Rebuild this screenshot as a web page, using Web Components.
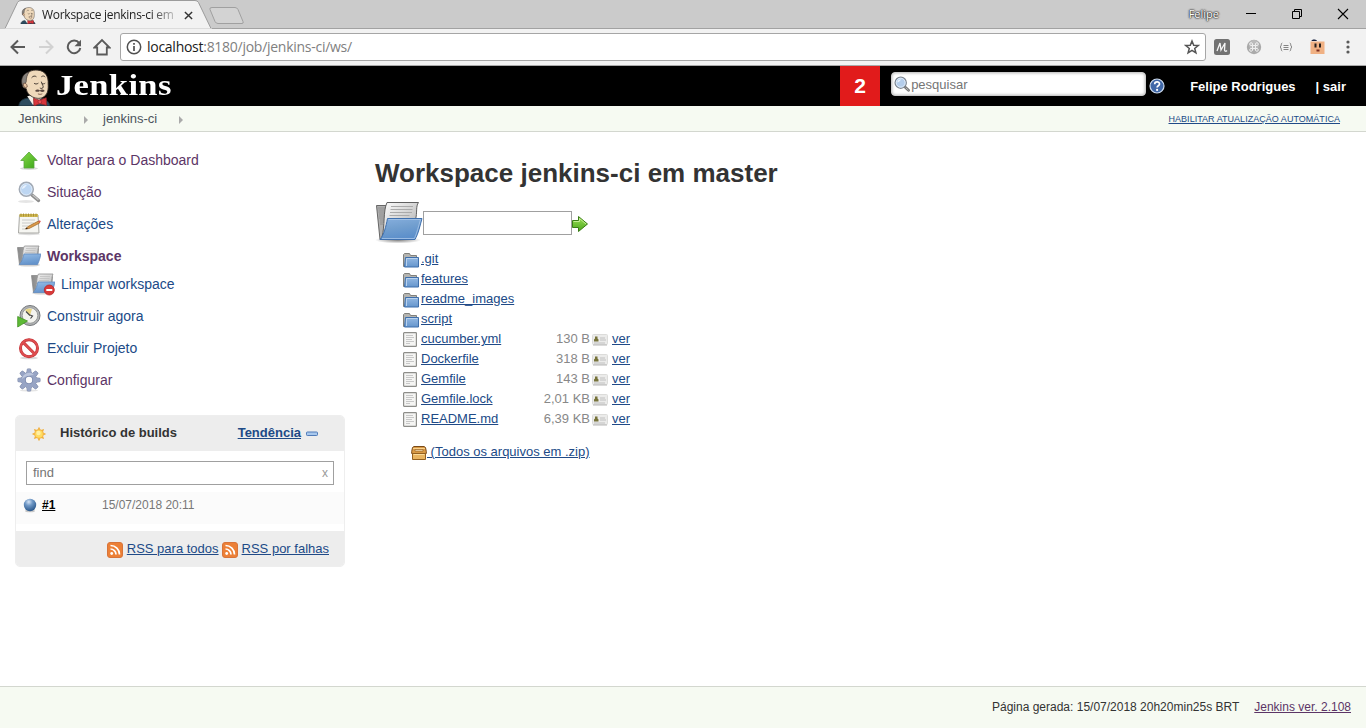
<!DOCTYPE html>
<html lang="pt-BR">
<head>
<meta charset="utf-8">
<title>Workspace jenkins-ci em master [Jenkins]</title>
<style>
html,body{margin:0;height:728px;overflow:hidden;background:#fff}
body{font:13px/20px "Liberation Sans",Arial,sans-serif;color:#333}
</style>
</head>
<body>
<jk-window></jk-window>
<script>
const define = (name, html) => customElements.define(name, class extends HTMLElement {
  connectedCallback() {
    if (this.shadowRoot) return;
    const t = document.createElement('template');
    t.innerHTML = typeof html === 'function' ? html(this) : html;
    this.attachShadow({mode:'open'}).append(t.content.cloneNode(true));
  }
});

const folder24 = `<defs><linearGradient id="b" x2=".3" y2="1"><stop stop-color="#94bce6"/><stop offset="1" stop-color="#6493cb"/></linearGradient><linearGradient id="g" x2="1"><stop stop-color="#8a8a8a"/><stop offset="1" stop-color="#c4c4c4"/></linearGradient><linearGradient id="p" x2="1" y2="1"><stop stop-color="#f0f0f0"/><stop offset="1" stop-color="#b8b8b8"/></linearGradient></defs>
<ellipse cx="12" cy="21" rx="11" ry="1.600" fill="#000" opacity=".18"/>
<path d="M.5 3.500h6l1 1h14l-1 13H4L2.500 20.500z" fill="url(#g)" stroke="#8a8a8a" stroke-width=".8"/>
<path d="M7.500 2H22c-1.400 2.500-1 6-2 10.500L4.500 17C6 11 5.500 5 7.500 2z" fill="url(#p)" stroke="#909090" stroke-width=".8"/>
<path d="M9 4.500h10M8.500 6.500h10M8 8.500h10" stroke="#c0c0c0" stroke-width=".8"/>
<path d="M7 10h17c-1 4-2 7.500-3.500 10.500H2.500c2.500-3 3.500-6.500 4.500-10.500z" fill="url(#b)" stroke="#5f8ac0" stroke-width=".8"/>`;
const rays = Array.from({length:8},(_,i)=>`<path d="M8 .8l1.500 3h-3z" transform="rotate(${i*45} 8 8)"/>`).join('');
const teeth = Array.from({length:8},(_,i)=>`<path d="M9.800 5.500l.6-4.500h3.200l.6 4.500z" transform="rotate(${i*45} 12 12)"/>`).join('');
const ICONS = {
  up:['0 0 24 24',`<defs><linearGradient id="a" x2="1" y2="1"><stop stop-color="#8bdc4b"/><stop offset="1" stop-color="#3aa518"/></linearGradient></defs><ellipse cx="12" cy="20.500" rx="9" ry="1.500" opacity=".15"/><path d="M12 4l8.200 8.500H17v7.500H7v-7.500H3.800z" fill="url(#a)" stroke="#58a43c" stroke-width=".8"/>`],
  search:['0 0 24 24',`<ellipse cx="9" cy="21.500" rx="8" ry="1.500" opacity=".1"/><path d="M15 15l6.500 5.500" stroke="#8c8c8c" stroke-width="3.400" stroke-linecap="round"/><path d="M16 15.300l5 4.200" stroke="#c4c4c4" stroke-width="1.400" stroke-linecap="round"/><circle cx="9.300" cy="9.300" r="6.900" fill="#bdd6f2" stroke="#a2aab5" stroke-width="1.700"/><circle cx="9.300" cy="9.300" r="5.700" fill="none" stroke="#e2edf9" stroke-width=".9"/><path d="M5 9c0-3 3-4.500 5-4C8.500 6.500 8 8 5 9z" fill="#e8f2fd"/>`],
  lens:['0 0 16 16',`<path d="M11 11l3.500 3.300" stroke="#777" stroke-width="2.800" stroke-linecap="round"/><path d="M12 12l2.200 2" stroke="#b8b8b8" stroke-width="1" stroke-linecap="round"/><circle cx="6.700" cy="6.700" r="5.600" fill="#b4cdeb" stroke="#7d858f" stroke-width="1.300"/><circle cx="6.700" cy="6.700" r="4.500" fill="none" stroke="#e2edf9" stroke-width=".9"/><path d="M3.300 6.500c0-2.200 2-3.500 4-3C6 4.500 5.500 6 3.300 6.500z" fill="#eaf3fd"/>`],
  notepad:['0 0 24 24',`<ellipse cx="12" cy="22" rx="11" ry="1.200" opacity=".13"/><path d="M2.500 3h18.500l1 18H1.500z" fill="#f6f6f2" stroke="#a8a8a4"/><path d="M2.500 2h18.500v3h-18.500z" fill="#d1bb57"/><path d="M4 1.500v3M6.500 1.500v3M9 1.500v3M11.500 1.500v3M14 1.500v3M16.500 1.500v3M19 1.500v3" stroke="#a0842a" stroke-width=".8"/><path d="M5 8h13M5 11h12M5 14h6M5 17h5" stroke="#cacac8"/><path d="M8.500 17l2.500-2.500L21.500 9l1.200 2-10.500 5.500z" fill="#dc9a4b" stroke="#9b6528" stroke-width=".7"/><path d="M8.500 17l1.300-1.500 1 1z"/><path d="M21.500 9l1.500-.8.800 1.500-1.300 1z" fill="#d55"/>`],
  folder:['0 0 24 24',folder24],
  wipe:['0 0 24 24',folder24+`<circle cx="18.300" cy="18" r="5" fill="#d93a3a" stroke="#b72727" stroke-width=".8"/><path d="M15.300 17h6v2h-6z" fill="#fff"/>`],
  clock:['0 0 24 24',`<circle cx="13" cy="11.500" r="10" fill="#b0b2b4" stroke="#75787b"/><circle cx="13" cy="11.500" r="7.800" fill="#f3f3ef" stroke="#9a9d9c"/><path d="M13 11.500L8 6a7 7 0 0 1 7-1z" fill="#e8d584"/><path d="M9 7.500l4 4M13.500 14.500l2-2.500-2.500-1" stroke="#484848" stroke-width="1.200" fill="none"/><path d="M.7 12.500l9.800 4.500L.7 23z" fill="#5dba35" stroke="#439125" stroke-width=".8"/>`],
  no:['0 0 24 24',`<ellipse cx="12" cy="22" rx="9" ry="1.300" opacity=".14"/><circle cx="12" cy="12.200" r="8.500" fill="#fff" stroke="#c03338" stroke-width="3"/><path d="M6.200 6.400l11.600 11.600" stroke="#c03338" stroke-width="3"/><circle cx="12" cy="12.200" r="8.500" fill="none" stroke="#df4e50" stroke-width="1.800"/><path d="M6.200 6.400l11.600 11.600" stroke="#df4e50" stroke-width="1.800"/>`],
  gear:['0 0 24 24',`<ellipse cx="12" cy="22.500" rx="9" ry="1" opacity=".1"/><g fill="#8c99ba" stroke="#7c88a8" stroke-width="1">${teeth}<circle cx="12" cy="12" r="7.500"/></g><g fill="#97a4c4">${teeth}<circle cx="12" cy="12" r="7.500"/></g><path d="M5 11a7 7 0 0 1 12-4c-4 0-8 1-12 4z" fill="#bbc5dc"/><circle cx="12" cy="12" r="4" fill="#7b89ad"/><circle cx="12" cy="12" r="3.200" fill="#fff"/>`],
  sun:['0 0 16 16',`<g fill="#f0ae38">${rays}</g><circle cx="8" cy="8" r="4.700" fill="#f4b23d"/><circle cx="8" cy="8" r="3.800" fill="#ffdc62"/><circle cx="7.500" cy="7" r="2.200" fill="#fff0a4"/>`],
  ball:['0 0 16 16',`<defs><radialGradient id="a" cx=".4" cy=".25" r=".75"><stop stop-color="#d4e3f5"/><stop offset=".4" stop-color="#6f98c6"/><stop offset="1" stop-color="#2a578b"/></radialGradient></defs><ellipse cx="8" cy="14" rx="5" ry="1.300" opacity=".2"/><circle cx="8" cy="8" r="6.200" fill="url(#a)"/>`],
  rss:['0 0 16 16',`<rect x=".5" y=".5" width="15" height="15" rx="2.500" fill="#ec8037" stroke="#d8743a"/><path d="M3.500 3.500c5 0 9 4 9 9M3.500 7c3 0 5.500 2.500 5.500 5.500" stroke="#fff" stroke-width="1.700" fill="none"/><circle cx="4.700" cy="11.500" r="1.400" fill="#fff"/>`],
  big:['0 0 48 48',`<defs><linearGradient id="b" x2=".3" y2="1"><stop stop-color="#87afde"/><stop offset=".5" stop-color="#729fcf"/><stop offset="1" stop-color="#5c8fcb"/></linearGradient><linearGradient id="p" x2="1" y2="1"><stop stop-color="#fff"/><stop offset="1" stop-color="#a8a8a8"/></linearGradient><radialGradient id="s"><stop stop-opacity=".5"/><stop offset="1" stop-opacity="0"/></radialGradient></defs><ellipse cx="23" cy="42" rx="23" ry="3.500" fill="url(#s)"/><path d="M1.500 7.500h10l2 1.500H36l-1 29-27 3.500H5z" fill="#b0b0b0" stroke="#666"/><path d="M3 10h7M3.500 12h7M3.500 14h7M4 16h6M4 18h6M4 20h5M5 22h4M5 24h4M5 26h3" stroke="#888" stroke-width=".8"/><path d="M12 4.500h31.500c-3 4-1 10-3 17L7 39C10 28 8 13 12 4.500z" fill="url(#p)" stroke="#606060"/><path d="M16 8.500h22M15.500 11.500h22M15 14.500h22M14.500 17.500h20" stroke="#aaa"/><path d="M12.500 20.500h34.500c-2 7-3.500 15-7 21H5c4-5 6-13 7.500-21z" fill="url(#b)" stroke="#3f70ae"/><path d="M13.500 21.500h32c-2 7-3.500 13-6 19H7" fill="none" stroke="#a9c7e8" stroke-width=".8"/>`],
  go:['0 0 16 16',`<defs><linearGradient id="a" y2="1" x2="0"><stop stop-color="#9cde57"/><stop offset="1" stop-color="#4ba81c"/></linearGradient></defs><path d="M.5 4.500h6v-4L15.500 8l-9 7.500v-4h-6z" fill="url(#a)" stroke="#3a7d16"/><path d="M1.500 5.500h6v-3L14 8" fill="none" stroke="#c9f29a" stroke-width=".9"/>`],
  dir:['0 0 16 16',`<defs><linearGradient id="a" x2="0" y2="1"><stop stop-color="#93b8e2"/><stop offset="1" stop-color="#6595cc"/></linearGradient></defs><path d="M.5 14.500V2.500l1-1h5l1 2h6v10z" fill="#b4b4b0" stroke="#80807c"/><path d="M2.500 5.500h13v9.500h-14z" fill="url(#a)" stroke="#3f6fab"/><path d="M3.500 14V6.500h11" fill="none" stroke="#b9d2ee"/>`],
  file:['0 0 16 16',`<rect x=".6" y=".6" width="12.800" height="13.800" rx=".7" fill="#f5f5f3" stroke="#8e8e8a" stroke-width="1.200"/><path d="M3 3.500h7M3 5.500h8M3 7.500h6M3 9.500h8M3 11.500h4" stroke="#c8c8c8"/>`],
  card:['0 0 16 16',`<rect x=".5" y="3.500" width="15" height="10" rx="1" fill="#ebebea" stroke="#dcdcda"/><path d="M1 14h14" stroke="#b8b8b8"/><path d="M2 10.500V8.500L3 7.500V5.500h2.500v2l1 1v2z" fill="#77733a"/><path d="M8 7h5M8 9h6M2 12h11" stroke="#c0c0c0"/>`],
  zip:['0 0 16 16',`<path d="M1.500 2.500l1.500-1h10l1.500 1 .8 4v2H.7v-2z" fill="#d99a45" stroke="#7a4a18"/><path d="M2 3.500h12" stroke="#fbd28c"/><path d="M4 4.500h8v1.600H4z" fill="#fce6bb" stroke="#8d581c" stroke-width=".6"/><path d="M1.500 8.500h13v6h-13z" fill="#e9b561" stroke="#94601f"/><path d="M2.500 9.500h11" stroke="#fbdc9d"/>`],
  help:['0 0 16 16',`<circle cx="8" cy="8" r="7" fill="#4068a8" stroke="#cfdcee" stroke-width="1.200"/><path d="M5.700 6.200c0-3 4.800-3 4.800-.2 0 1.800-2.400 1.700-2.400 3.600" stroke="#fff" stroke-width="1.700" fill="none"/><circle cx="8.100" cy="11.900" r="1.100" fill="#fff"/>`],
  collapse:['0 0 12 6',`<rect x=".5" y="1" width="11" height="3.500" rx=".8" fill="#a8c8ed" stroke="#507bb8"/>`],
  butler:['0 0 33 38',`<path d="M.5 38c0-5 4-7 8-8h16c4 1 7 4 8 8z" fill="#2d4c5f" stroke="#1b2e38"/><path d="M9 28l6 9 10-8-3-4z" fill="#f4f1e9"/>
<path d="M6 8C9 2.500 14 .8 20 1.200c8 .8 11 7 10.500 14 .3 5 0 10-4 13-3 2.500-8 2.500-12 .5-4-2-6-5-6.500-8.500C4 19 3 16 5.500 14z" fill="#efd9bb" stroke="#332a25" stroke-width=".9"/><path d="M4 17C2 11 4 4.500 11 3 9 6 8 9 8 13l-1.500 3z" fill="#86817c" stroke="#332a25" stroke-width=".6"/><path d="M5 15c2.500-1 4 .5 4 3.500-2.500 1.500-4-.5-4-3.500z" fill="#e6c4a2" stroke="#5a3d2f" stroke-width=".7"/><path d="M13.500 9c1.500-2 3.500-2.200 5-1M23.500 8c1.500-1.200 3-1 4 .3M16 14.500c1 1.200 3 1.200 4.500 0M24 14.500c1 1 2.500 1 3.500 0M23.500 13c.5 3 3 5 1.500 6.500-1 .8-2.300.4-3 0" fill="none" stroke="#332a25" stroke-width=".9"/><path d="M17 22.500c2-2.300 4-1.500 5-.5 1.500-1.500 4-1 5 .5-2 1.700-3.500 1-5 0-1.500 1.200-3 1.300-5 0z" fill="#5b4840"/><path d="M20 25.500c1.500.7 3 .7 4.500 0" fill="none" stroke="#6d493c" stroke-width=".8"/><path d="M15.500 30l6 2 7-2.500.5 8-7-2-6 2.500z" fill="#d8363c" stroke="#8c2628" stroke-width=".8"/><circle cx="22" cy="33.700" r="1.900" fill="#ea5055" stroke="#8c2628" stroke-width=".6"/>`],
  back:['0 0 16 16',`<path d="M15 8H2.500M8 1.500L1.500 8 8 14.500" fill="none" stroke="#5a5a5a" stroke-width="2"/>`],
  fwd:['0 0 16 16',`<path d="M1 8h12.500M8 1.500L14.500 8 8 14.500" fill="none" stroke="#d2d2d2" stroke-width="2"/>`],
  reload:['0 0 16 16',`<path d="M13.200 4.200A6.300 6.300 0 1 0 14.300 9" fill="none" stroke="#5a5a5a" stroke-width="2"/><path d="M15 .8v6.500H8.500z" fill="#5a5a5a"/>`],
  home:['0 0 18 18',`<path d="M1.500 9.500L9 2l7.500 7.500h-2.700v7H4.200v-7z" fill="none" stroke="#5a5a5a" stroke-width="1.800"/>`],
  info:['0 0 16 16',`<circle cx="8" cy="8" r="6.700" fill="none" stroke="#505050" stroke-width="1.500"/><path d="M8 7v5M8 4v1.800" stroke="#505050" stroke-width="1.700"/>`],
  star:['0 0 16 16',`<path d="M8 2l1.700 4.200 4.500.3-3.500 2.900 1.200 4.400L8 11.300l-3.900 2.500 1.200-4.400-3.500-2.900 4.500-.3z" fill="none" stroke="#555" stroke-width="1.500"/>`],
  ext1:['0 0 16 16',`<rect width="16" height="16" rx="2.500" fill="#727272"/><path d="M3 12L6 4l1 7 4-7-.5 7c0 1.600 1.500 1.500 2.500.5" stroke="#f5f5f5" stroke-width="1.300" fill="none"/>`],
  ext2:['0 0 16 16',`<circle cx="8" cy="8" r="7.200" fill="#aaa"/><circle cx="8" cy="6" r="5" fill="#bbb"/><path d="M6.500 6.500h3v3h-3zM6.500 6.500H5A1.400 1.400 0 1 1 6.500 5zM9.500 6.500V5A1.400 1.400 0 1 1 11 6.500zM9.500 9.500H11A1.400 1.400 0 1 1 9.500 11zM6.500 9.500V11A1.400 1.400 0 1 1 5 9.500z" fill="none" stroke="#eee"/>`],
  ext3:['0 0 16 16',`<path d="M4.300 4C2.500 4 4 7.500 2 8c2 .5.500 4 2.300 4M11.700 4c1.800 0 .3 3.500 2.300 4-2 .5-.5 4-2.300 4M5.500 6.500h5M5.500 8.500h5M5.500 10.500h5" fill="none" stroke="#777" stroke-width=".9"/>`],
  ext4:['0 0 16 16',`<path d="M.5 2.500h14v12.500H.5z" fill="#f0b184"/><path d="M1.500 2c0-2 5-2 5.500 0z" fill="#16213e"/><path d="M4.500 4.500h2v4h-2zM9 4.500h2v4H9z" fill="#26201e"/><path d="M6.500 10.500h3v2h-3z" fill="#7b2d20"/>`],
  menu:['0 0 4 14',`<g fill="#5a5a5a"><circle cx="2" cy="2" r="1.600"/><circle cx="2" cy="7" r="1.600"/><circle cx="2" cy="12" r="1.600"/></g>`],
  x:['0 0 10 10',`<path d="M1 1l8 8M9 1L1 9" stroke="#333" stroke-width="1.600"/>`],
  wmin:['0 0 12 12',`<path d="M1 5.500h10" stroke="#000"/>`],
  wmax:['0 0 12 12',`<path d="M1.500 3.500h7v7h-7zM3.500 3.500v-2h7v7h-2" fill="none" stroke="#000"/>`],
  wclose:['0 0 12 12',`<path d="M1 1l10 10M11 1L1 11" stroke="#000" stroke-width="1.100"/>`],
};
define('jk-icon', e => {
  const [vb, art] = ICONS[e.getAttribute('name')];
  const w = e.getAttribute('w') || 16, h = e.getAttribute('h') || w;
  return `<style>:host{display:block;flex:none;width:${w}px;height:${h}px}svg{display:block}</style><svg width="${w}" height="${h}" viewBox="${vb}" aria-hidden="true">${art}</svg>`;
});

define('chrome-tabs', `<style>
:host{display:flex;height:28px;background:#cbcbcb;border-bottom:1px solid #a2a2a2;font:12px/28px "Open Sans","Noto Sans",sans-serif;color:#222}
.strip{flex:1;display:grid}
.strip>*{grid-area:1/1}
.tab{display:flex;align-items:center;padding:2px 0 0 20px;height:26px}
.title{margin-left:6px;width:132px;overflow:hidden;white-space:nowrap;letter-spacing:-.28px;-webkit-mask:linear-gradient(90deg,#000 108px,transparent 140px);margin-right:10px}
.win{display:flex;align-items:center;padding-right:17px}
.user{color:#fff;font-size:11px;line-height:26px;text-shadow:0 0 2px #222,0 0 2px #222,0 0 1px #222;margin-right:26px}
.win jk-icon{margin-right:34px}.win jk-icon:last-child{margin:0}
</style>
<div class="strip"><svg width="260" height="29"><path d="M0 28.500h5L17.500 2.500Q18.500.5 21 .5h174q2.500 0 3.500 2L211 28.500V29H0z" fill="#f2f2f2" stroke="#9b9b9b"/><path d="M0 29h212" stroke="#f2f2f2"/><path d="M212 7.500h23q2 0 3 2l5 12q.8 2-1 2h-24q-2 0-3-2l-5-12q-.8-2 2-2z" fill="#d3d3d3" stroke="#a0a0a0"/></svg>
<div class="tab"><jk-icon name="butler" w="16" h="17"></jk-icon><span class="title">Workspace jenkins-ci em</span><jk-icon name="x" w="9"></jk-icon></div></div>
<div class="win"><span class="user">Felipe</span><jk-icon name="wmin" w="12"></jk-icon><jk-icon name="wmax" w="12"></jk-icon><jk-icon name="wclose" w="12"></jk-icon></div>`);

define('chrome-toolbar', `<style>
:host{display:flex;box-sizing:border-box;height:37px;background:#f2f2f2;border-bottom:1px solid #a9a9a9;align-items:center;padding:0 16px 0 10px;font:14px/26px "Open Sans","Noto Sans",sans-serif}
.nav{display:flex;gap:12px;width:110px;align-items:center}.nav :last-child{margin-left:-1px}
.url{flex:1;box-sizing:border-box;height:28px;border:1px solid #a6a6a6;border-radius:3px;background:#fff;display:flex;align-items:center;padding:0 5px 0 5px;margin-right:8px;color:#808080}
.url span{flex:1;margin-left:5px;letter-spacing:-.27px}b{font-weight:400;color:#1b1b1b}
.ext{display:flex;gap:16px;align-items:center}.ext :last-child{margin-left:4px}
</style>
<div class="nav"><jk-icon name="back"></jk-icon><jk-icon name="fwd"></jk-icon><jk-icon name="reload"></jk-icon><jk-icon name="home" w="18"></jk-icon></div>
<div class="url"><jk-icon name="info" w="16"></jk-icon><span><b>localhost</b>:8180/job/jenkins-ci/ws/</span><jk-icon name="star"></jk-icon></div>
<div class="ext"><jk-icon name="ext1"></jk-icon><jk-icon name="ext2"></jk-icon><jk-icon name="ext3"></jk-icon><jk-icon name="ext4"></jk-icon><jk-icon name="menu" w="4" h="14"></jk-icon></div>`);

define('jk-header', `<style>
:host{display:flex;height:40px;background:#000;color:#fff;font-weight:700;align-items:center;font-size:13px}
.logo{display:flex;flex:1;padding-left:18px;height:40px;align-items:flex-end}
.name{font:700 29px/38px "Liberation Serif",Georgia,serif;align-self:flex-start;margin-left:5px;letter-spacing:.3px;transform:scaleX(1.19);transform-origin:0 50%}
.count{width:40px;height:40px;background:#e11b1b;text-align:center;font-size:21px;line-height:40px;margin-right:11px}
.search{box-sizing:border-box;width:255px;height:24px;border-radius:4px;background:#fff;border:1px solid #ccc;box-shadow:inset 0 0 3px #aaa;display:flex;align-items:center;color:#757575;font-weight:400;margin:-4px 3px 0 0;padding-left:2px}
.search span{padding:2px 0 0 1px}
.who{margin-left:25px;padding-top:2px}.out{margin:0 20px 0 20px;padding-top:2px}
</style>
<div class="logo"><jk-icon name="butler" w="33" h="37"></jk-icon><span class="name">Jenkins</span></div>
<div class="count">2</div><div class="search"><jk-icon name="lens"></jk-icon><span>pesquisar</span></div><jk-icon name="help"></jk-icon><span class="who">Felipe Rodrigues</span><span class="out">| sair</span>`);

define('jk-breadcrumbs', `<style>
:host{display:flex;box-sizing:border-box;height:26px;background:#f6faf2;border-bottom:1px solid #d3d7cf;align-items:center;padding:0 26px 0 18px;color:#4d545d;font-size:13px;line-height:24px}
i{border:4px solid transparent;border-left-color:#aaa;border-right:0;margin:2px 15px 0 22px}
a{margin-left:auto;color:#204a87;text-decoration:underline;font-size:9px;letter-spacing:.03px}
</style><span>Jenkins</span><i></i><span>jenkins-ci</span><i></i><a>HABILITAR ATUALIZAÇÃO AUTOMÁTICA</a>`);

define('jk-task', e => `<style>
:host{display:flex;height:32px;align-items:center;gap:6px;font-size:14px;color:#204a87}
:host([visited]){color:#5c3566}:host([current]){font-weight:700}
:host([sub]){height:24px;margin:0 0 4px 14px}
</style><jk-icon name="${e.getAttribute('icon')}" w="24"></jk-icon><span><slot></slot></span>`);

define('jk-history', `<style>
:host{display:block;box-sizing:border-box;margin:19px 0 0 -2px;width:330px;height:152px;border:1px solid #eee;border-radius:5px;overflow:hidden}
a{color:#204a87;text-decoration:underline}
.head{display:flex;height:35px;background:#ededed;align-items:center;font-weight:700;font-size:13px;padding:0 26px 0 15px}
.head b{margin-left:13px;flex:1}.head a{margin-right:5px}.head b,.head a{padding-bottom:2px}
.find{box-sizing:border-box;margin:10px 10px 7px;border:1px solid #a0a0a0;height:24px;display:flex;justify-content:space-between;line-height:22px;padding:0 5px 0 6px;color:#757575}
.find i{font-style:normal;font-size:12px;color:#999}
.row{display:flex;height:32px;background:#fbfbfb;padding-left:6px}
.row jk-icon{margin-top:5px}.row a{font-weight:700;color:#000;font-size:12px;line-height:26px;margin-left:4px;width:60px}.row span{font-size:12px;line-height:26px;color:#777}
.foot{display:flex;height:35px;margin-top:7px;background:#ededed;align-items:center;justify-content:flex-end;gap:4px;padding-right:15px;font-size:13px}
.foot jk-icon{margin:3px 0 0 -1px}
</style>
<div class="head"><jk-icon name="sun"></jk-icon><b>Histórico de builds</b><a>Tendência</a><jk-icon name="collapse" w="12" h="6"></jk-icon></div>
<div class="find"><span>find</span><i>x</i></div>
<div class="row"><jk-icon name="ball"></jk-icon><a>#1</a><span>15/07/2018 20:11</span></div>
<div class="foot"><jk-icon name="rss"></jk-icon><a>RSS para todos</a><jk-icon name="rss"></jk-icon><a>RSS por falhas</a></div>`);

define('jk-side', `<style>:host{display:block;width:358px;box-sizing:border-box;padding:12px 0 0 17px}</style>
<jk-task icon="up" visited>Voltar para o Dashboard</jk-task><jk-task icon="search" visited>Situação</jk-task><jk-task icon="notepad">Alterações</jk-task><jk-task icon="folder" visited current>Workspace</jk-task><jk-task icon="wipe" sub>Limpar workspace</jk-task><jk-task icon="clock">Construir agora</jk-task><jk-task icon="no">Excluir Projeto</jk-task><jk-task icon="gear" visited>Configurar</jk-task>
<jk-history></jk-history>`);

define('jk-file', e => {
  const size = e.getAttribute('size');
  return `<style>
:host{display:flex;height:20px;line-height:20px;align-items:flex-start;width:259px;font-size:13px}
a{color:#204a87;text-decoration:underline}.n{margin-left:2px;flex:1}.s{color:#888}
jk-icon{margin-top:3px}.c{margin:2px 4px 0 2px}.v{width:50px;flex:none}
</style><jk-icon name="${size?'file':'dir'}"></jk-icon><a class="n"><slot></slot></a>${size?`<span class="s">${size}</span><jk-icon class="c" name="card"></jk-icon><span class="v"><a>ver</a></span>`:''}`;
});

define('jk-workspace', `<style>
:host{display:block;padding:24px 0 0 17px}
h1{margin:0;font-size:26px;line-height:34px;color:#333}
.path{display:flex;align-items:center;height:48px;margin:8px 0 2px}
.path div{box-sizing:border-box;width:149px;height:24px;border:1px solid #a0a0a0;margin-top:1px}
.path .go{margin-top:4px}
.files{padding:1px 0 0 28px}
.zip{display:flex;align-items:center;margin:13px 0 0 36px;font-size:13px}
.zip a{color:#204a87;text-decoration:underline;white-space:pre}.zip jk-icon{margin-top:2px}
</style>
<h1>Workspace jenkins-ci em master</h1>
<div class="path"><jk-icon name="big" w="48"></jk-icon><div></div><jk-icon class="go" name="go"></jk-icon></div>
<div class="files"><jk-file>.git</jk-file><jk-file>features</jk-file><jk-file>readme_images</jk-file><jk-file>script</jk-file><jk-file size="130 B">cucumber.yml</jk-file><jk-file size="318 B">Dockerfile</jk-file><jk-file size="143 B">Gemfile</jk-file><jk-file size="2,01 KB">Gemfile.lock</jk-file><jk-file size="6,39 KB">README.md</jk-file></div>
<div class="zip"><jk-icon name="zip"></jk-icon><a> (Todos os arquivos em .zip)</a></div>`);

define('jk-footer', `<style>
:host{display:flex;box-sizing:border-box;height:42px;background:#f6faf2;border-top:1px solid #d3d7cf;justify-content:flex-end;gap:15px;padding-right:15px;font-size:12px;line-height:41px}
a{color:#5c3566;text-decoration:underline}
</style><span>Página gerada: 15/07/2018 20h20min25s BRT</span><a>Jenkins ver. 2.108</a>`);

define('jk-window', `<style>
:host{display:flex;flex-direction:column;width:1366px;height:728px}
chrome-tabs,chrome-toolbar,jk-header,jk-breadcrumbs,jk-footer{flex:none}
main{flex:1;display:flex;min-height:0}jk-workspace{flex:1}
</style><chrome-tabs></chrome-tabs><chrome-toolbar></chrome-toolbar><jk-header></jk-header><jk-breadcrumbs></jk-breadcrumbs><main><jk-side></jk-side><jk-workspace></jk-workspace></main><jk-footer></jk-footer>`);
</script>
</body>
</html>
